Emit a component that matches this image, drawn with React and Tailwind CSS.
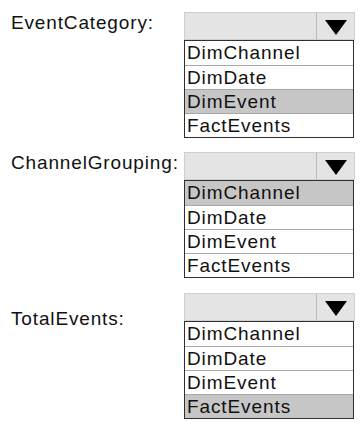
import React from 'react';

const options = ['DimChannel', 'DimDate', 'DimEvent', 'FactEvents'];

const fields = [
  { label: 'EventCategory:', selected: 'DimEvent', labelTop: 'mt-0', gap: 'mt-0' },
  { label: 'ChannelGrouping:', selected: 'DimChannel', labelTop: 'mt-0', gap: 'mt-[14px]' },
  { label: 'TotalEvents:', selected: 'FactEvents', labelTop: 'mt-[15px]', gap: 'mt-[15px]' },
];

const Dropdown = ({ selected }) => (
  <div className="w-[171px] shrink-0">
    {/* closed select box */}
    <div className="h-[28px] flex border border-[#cfcfcf] bg-[#e4e4e4]">
      <div className="flex-1" />
      <div className="w-[38px] border-l border-[#b9b9b9] flex items-center justify-center">
        <svg width="22" height="15" viewBox="0 0 22 15" className="mt-[2px]">
          <polygon points="0,0 22,0 11,15" fill="#000" />
        </svg>
      </div>
    </div>
    {/* open list */}
    <div className="border border-[#2f2f2f] bg-white mr-[1px]">
      {options.map((o, i) => (
        <div
          key={o}
          className={`h-[24px] pl-[2px] leading-[23px] text-[19px] tracking-[0.9px] text-[#111] ${
            i > 0 ? 'border-t border-[#a8a8a8]' : ''
          } ${o === selected ? 'bg-[#c6c6c6]' : ''}`}
        >
          {o}
        </div>
      ))}
    </div>
  </div>
);

export default function App() {
  return (
    <div className="w-[361px] h-[427px] bg-white overflow-hidden font-['Liberation_Sans',Arial,sans-serif]">
      <div className="pt-[12px]">
        {fields.map((f) => (
          <div key={f.label} className={`flex ${f.gap}`}>
            <div className={`w-[184px] shrink-0 pl-[11px] -mt-[1px] ${f.labelTop}`}>
              <span className="text-[19px] leading-[22px] tracking-[0.85px] text-[#111]">{f.label}</span>
            </div>
            <Dropdown selected={f.selected} />
          </div>
        ))}
      </div>
    </div>
  );
}
